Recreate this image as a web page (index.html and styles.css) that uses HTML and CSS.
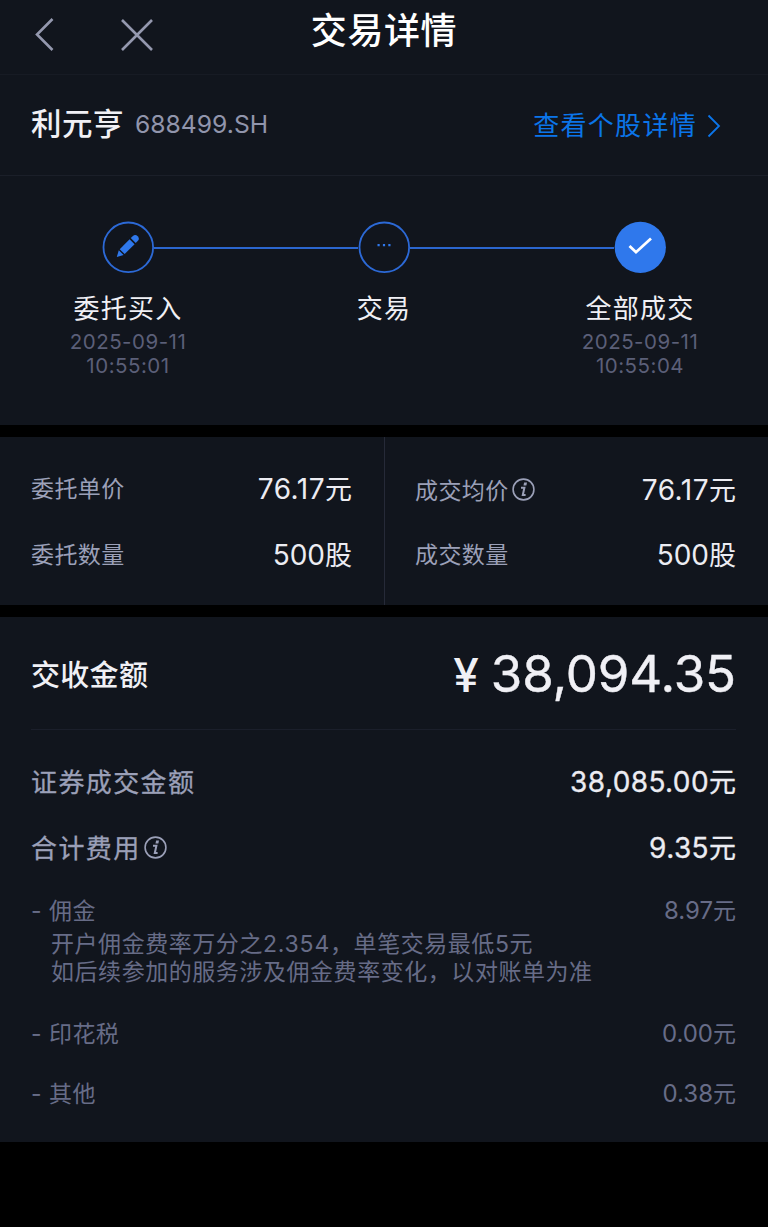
FILE: index.html
```
<!DOCTYPE html>
<html lang="zh-CN">
<head>
    <meta charset="UTF-8">
    <meta name="viewport" content="width=device-width, initial-scale=1.0">
    <title>交易详情</title>
    <link rel="stylesheet" href="styles.css">
</head>
<body>

    <header class="header">
        <div class="nav">
            <svg class="icon-back" width="20" height="36" viewBox="0 0 20 36"><path d="M17.5 2L2 17.5L17.5 33"/></svg>
            <svg class="icon-close" width="34" height="34" viewBox="0 0 34 34"><path d="M2 2L32 32M32 2L2 32"/></svg>
        </div>
        <h1>交易详情</h1>
    </header>

    <div class="stock">
        <span class="stock-name">利元亨</span>
        <span class="stock-code">688499.SH</span>
        <a class="stock-link" href="#"><span>查看个股详情</span>
            <svg width="14" height="24" viewBox="0 0 14 24"><path d="M1.5 1.5L12 12L1.5 22.5"/></svg>
        </a>
    </div>

    <div class="steps">
        <div class="step">
            <div class="step-bar first">
                <svg class="circle" width="52" height="52" viewBox="0 0 52 52">
                    <circle class="ring" cx="26.3" cy="26.3" r="24.8"/>
                    <g class="pencil" transform="translate(14.8 36) rotate(-45)">
                        <path d="M0 0L6.2 -3.4V3.4Z"/>
                        <path d="M7.6 -3.5H21.6V3.5H7.6Z"/>
                        <path d="M23.2 -3.5H26A3.5 3.5 0 0 1 26 3.5H23.2Z"/>
                    </g>
                </svg>
            </div>
            <p class="step-name">委托买入</p>
            <p class="step-time">2025-09-11<br>10:55:01</p>
        </div>
        <div class="step">
            <div class="step-bar">
                <svg class="circle" width="52" height="52" viewBox="0 0 52 52">
                    <circle class="ring" cx="26.3" cy="26.3" r="24.8"/>
                    <path class="dots" d="M19.5 23h2.2v2.2h-2.2zM24.9 23h2.2v2.2h-2.2zM30.3 23h2.2v2.2h-2.2z"/>
                </svg>
            </div>
            <p class="step-name">交易</p>
        </div>
        <div class="step">
            <div class="step-bar last">
                <svg class="circle" width="52" height="52" viewBox="0 0 52 52">
                    <circle class="full" cx="26.3" cy="26.3" r="25.6"/>
                    <path class="check" d="M15.5 24.9L22 31.2L37 17.5"/>
                </svg>
            </div>
            <p class="step-name">全部成交</p>
            <p class="step-time">2025-09-11<br>10:55:04</p>
        </div>
    </div>

    <div class="order">
        <div class="order-col">
            <div class="order-row"><span class="label">委托单价</span><span class="value price">76.17<b>元</b></span></div>
            <div class="order-row"><span class="label">委托数量</span><span class="value">500<b>股</b></span></div>
        </div>
        <div class="order-col deal">
            <div class="order-row">
                <span class="label">成交均价
                    <svg class="info" width="23" height="23" viewBox="0 0 23 23"><circle cx="11.5" cy="11.5" r="10.4"/><path class="dot" d="M12.1 4.6h2.9l-.6 2.8h-2.9z"/><path class="stem" d="M9 9.8H12.4L10.8 17H13.6"/></svg>
                </span>
                <span class="value price">76.17<b>元</b></span>
            </div>
            <div class="order-row"><span class="label">成交数量</span><span class="value">500<b>股</b></span></div>
        </div>
    </div>

    <div class="settle">
        <div class="total">
            <span class="total-label">交收金额</span>
            <span class="total-value"><span class="yen">¥</span>38,094.35</span>
        </div>

        <div class="row">
            <span class="label">证券成交金额</span>
            <span class="value">38,085.00<b>元</b></span>
        </div>
        <div class="row">
            <span class="label">合计费用
                <svg class="info" width="23" height="23" viewBox="0 0 23 23"><circle cx="11.5" cy="11.5" r="10.4"/><path class="dot" d="M12.1 4.6h2.9l-.6 2.8h-2.9z"/><path class="stem" d="M9 9.8H12.4L10.8 17H13.6"/></svg>
            </span>
            <span class="value">9.35<b>元</b></span>
        </div>

        <div class="fee"><span><i>-</i>佣金</span><span class="fee-value">8.97<b>元</b></span></div>
        <p class="note">开户佣金费率万分之<span>2.354</span>，单笔交易最低5元<br>如后续参加的服务涉及佣金费率变化，以对账单为准</p>
        <div class="fee tax"><span><i>-</i>印花税</span><span class="fee-value">0.00<b>元</b></span></div>
        <div class="fee other"><span><i>-</i>其他</span><span class="fee-value">0.38<b>元</b></span></div>
    </div>

</body>
</html>
```
FILE: styles.css
```
* {
    box-sizing: border-box;
}

body {
    font-family: Inter, "Noto Sans CJK SC", sans-serif;
    background-color: #000;
    color: #f0f0f5;
    margin: 0;
    min-height: 1227px;
}

h1, p {
    margin: 0;
}

b, i {
    font-weight: inherit;
    font-style: normal;
}

svg {
    fill: none;
    flex-shrink: 0;
}

.header, .stock, .steps, .order, .settle {
    background-color: #11151d;
}

/* header */
.header {
    height: 75px;
    display: grid;
    grid-template-columns: 1fr auto 1fr;
    border-bottom: 1px solid #171b24;
}

.nav {
    display: flex;
    align-items: center;
    gap: 65px;
    height: 69px;
    padding-left: 35px;
}

.icon-back, .icon-close {
    stroke: #9498ae;
    stroke-width: 2.6;
}

h1 {
    font-size: 36px;
    font-weight: 500;
    letter-spacing: 0.6px;
    line-height: 62px;
    color: #fff;
}

/* stock name */
.stock {
    height: 101px;
    padding: 0 47px 2px 31px;
    display: flex;
    align-items: center;
    border-bottom: 1px solid #1b1f29;
}

.stock-name {
    font-size: 30.5px;
    font-weight: 500;
    letter-spacing: 0.5px;
    line-height: 50px;
}

.stock-code {
    margin-left: 11px;
    font-size: 24.7px;
    color: #9195ac;
}

.stock-link {
    margin-left: auto;
    padding-top: 4px;
    display: flex;
    align-items: center;
    gap: 10px;
    font-size: 26px;
    letter-spacing: 1.3px;
    line-height: 42px;
    color: #0b75ea;
    text-decoration: none;
}

.stock-link svg {
    margin-bottom: 1px;
    stroke: #0b75ea;
    stroke-width: 1.8;
}

/* steps */
.steps {
    height: 249px;
    padding-top: 45px;
    display: grid;
    grid-template-columns: repeat(3, 1fr);
    text-align: center;
}

.step-bar {
    display: flex;
    align-items: center;
    height: 52px;
}

.step-bar::before, .step-bar::after {
    content: "";
    flex: 1;
    height: 2px;
    margin-top: 1px;
    background-color: #2b66cf;
}

.step-bar.first::before, .step-bar.last::after {
    background-color: transparent;
}

.ring {
    stroke: #2c69d6;
    stroke-width: 1.8;
}

.full, .pencil, .dots {
    fill: #2f78ec;
}

.check {
    stroke: #fff;
    stroke-width: 2.8;
}

.step-name {
    margin-top: 16px;
    font-size: 26px;
    letter-spacing: 1.3px;
    line-height: 40px;
}

.step-time {
    margin-top: 1px;
    font-size: 20.5px;
    letter-spacing: 0.5px;
    line-height: 24px;
    color: #5b5f78;
}

/* order */
.order {
    height: 168px;
    margin: 12px 0;
    display: grid;
    grid-template-columns: 1fr 1fr;
}

.order-col {
    padding: 17px 32px 0 31px;
}

.order-col.deal {
    padding-left: 30px;
    border-left: 1px solid #262a38;
}

.order-row {
    height: 66px;
    display: flex;
    justify-content: space-between;
    align-items: center;
}

.deal .order-row:first-child {
    padding-top: 3px;
}

.label {
    display: flex;
    align-items: center;
    gap: 3px;
    color: #9ba0b8;
}

.order .label {
    font-size: 23px;
    letter-spacing: 0.4px;
}

.value {
    font-size: 28px;
    color: #ececf2;
}

.order .price {
    letter-spacing: 0.5px;
}

.value b {
    font-size: 27px;
    letter-spacing: 0;
}

.info {
    margin-top: 1px;
    stroke: #9ba0b8;
    stroke-width: 1.6;
}

.info .dot {
    fill: #9ba0b8;
    stroke: none;
}

.info .stem {
    stroke-width: 2;
}

/* settlement */
.settle {
    height: 525px;
    padding: 0 32px 0 31px;
}

.total {
    height: 113px;
    display: flex;
    justify-content: space-between;
    align-items: center;
    border-bottom: 1px solid #1b1f2b;
}

.total-label {
    font-size: 29px;
    font-weight: 500;
    letter-spacing: 0.3px;
}

.total-value {
    font-size: 51px;
    letter-spacing: -0.1px;
    -webkit-text-stroke: 0.4px;
}

.yen {
    margin-right: 12px;
    font-size: 46px;
    font-weight: 500;
    -webkit-text-stroke: 0;
}

.row {
    height: 66px;
    display: flex;
    justify-content: space-between;
    align-items: center;
}

.total + .row {
    margin-top: 17px;
}

.row .label {
    font-size: 26px;
    letter-spacing: 1.4px;
    -webkit-text-stroke: 0.3px;
}

.row .info {
    margin-top: 2px;
}

.row .value {
    letter-spacing: 0.4px;
    -webkit-text-stroke: 0.3px;
}

.fee {
    height: 36px;
    margin-top: 12px;
    display: flex;
    justify-content: space-between;
    align-items: center;
    font-size: 23px;
    letter-spacing: 0.4px;
    color: #676c87;
}

.fee i {
    display: inline-block;
    width: 18px;
}

.fee-value {
    font-size: 24px;
    letter-spacing: 0;
}

.fee-value b {
    font-size: 23px;
}

.fee.tax {
    margin-top: 28px;
}

.fee.other {
    margin-top: 24px;
}

.note {
    margin-top: 3px;
    padding-left: 20px;
    font-size: 23px;
    letter-spacing: 0.55px;
    line-height: 28px;
    color: #676c87;
    white-space: nowrap;
}

.note span {
    letter-spacing: 0.8px;
}
```
